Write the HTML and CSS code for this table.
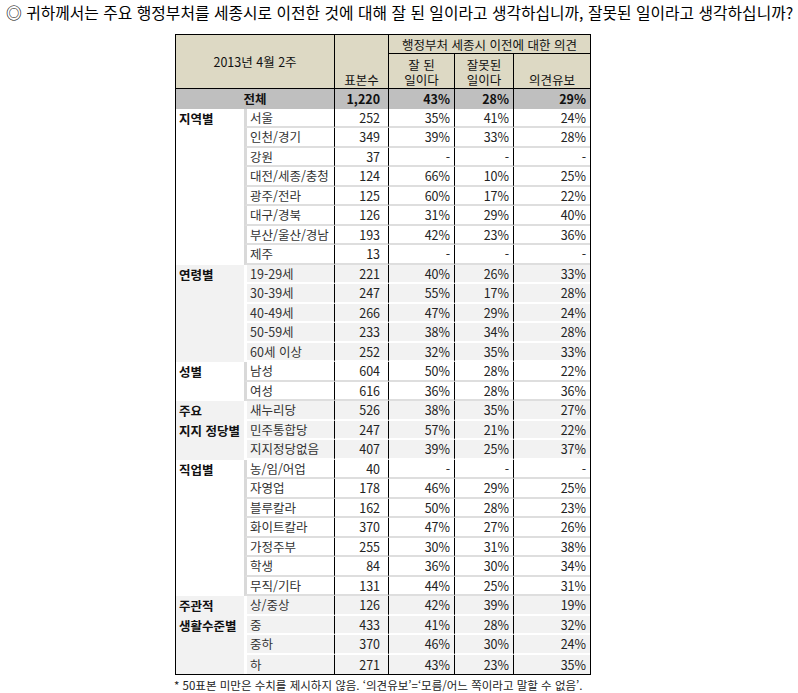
FILE: index.html
```html
<!DOCTYPE html>
<html lang="ko">
<head>
<meta charset="utf-8">
<link rel="stylesheet" href="styles.css">
</head>
<body>
<div class="title">◎ 귀하께서는 주요 행정부처를 세종시로 이전한 것에 대해 잘 된 일이라고 생각하십니까, 잘못된 일이라고 생각하십니까?</div>
<table class="survey">
  <colgroup>
    <col class="c-cat"><col class="c-sub"><col class="c-n"><col class="c-p1"><col class="c-p2"><col class="c-p3">
  </colgroup>
  <thead>
    <tr class="h1">
      <th colspan="2" rowspan="2" class="date">2013년 4월 2주</th>
      <th rowspan="2" class="nh">표본수</th>
      <th colspan="3" class="top">행정부처 세종시 이전에 대한 의견</th>
    </tr>
    <tr class="h2">
      <th class="ph">잘 된<br>일이다</th>
      <th class="ph">잘못된<br>일이다</th>
      <th class="ph">의견유보</th>
    </tr>
  </thead>
  <tbody class="total">
    <tr><td colspan="2" class="tl">전체</td><td class="n">1,220</td><td class="p">43%</td><td class="p">28%</td><td class="p">29%</td></tr>
  </tbody>
  <tbody class="w">
    <tr><td rowspan="8" class="cat">지역별</td><td class="sub">서울</td><td class="n">252</td><td class="p">35%</td><td class="p">41%</td><td class="p">24%</td></tr>
    <tr><td class="sub">인천/경기</td><td class="n">349</td><td class="p">39%</td><td class="p">33%</td><td class="p">28%</td></tr>
    <tr><td class="sub">강원</td><td class="n">37</td><td class="p">-</td><td class="p">-</td><td class="p">-</td></tr>
    <tr><td class="sub">대전/세종/충청</td><td class="n">124</td><td class="p">66%</td><td class="p">10%</td><td class="p">25%</td></tr>
    <tr><td class="sub">광주/전라</td><td class="n">125</td><td class="p">60%</td><td class="p">17%</td><td class="p">22%</td></tr>
    <tr><td class="sub">대구/경북</td><td class="n">126</td><td class="p">31%</td><td class="p">29%</td><td class="p">40%</td></tr>
    <tr><td class="sub">부산/울산/경남</td><td class="n">193</td><td class="p">42%</td><td class="p">23%</td><td class="p">36%</td></tr>
    <tr><td class="sub">제주</td><td class="n">13</td><td class="p">-</td><td class="p">-</td><td class="p">-</td></tr>
  </tbody>
  <tbody class="g">
    <tr><td rowspan="5" class="cat">연령별</td><td class="sub">19-29세</td><td class="n">221</td><td class="p">40%</td><td class="p">26%</td><td class="p">33%</td></tr>
    <tr><td class="sub">30-39세</td><td class="n">247</td><td class="p">55%</td><td class="p">17%</td><td class="p">28%</td></tr>
    <tr><td class="sub">40-49세</td><td class="n">266</td><td class="p">47%</td><td class="p">29%</td><td class="p">24%</td></tr>
    <tr><td class="sub">50-59세</td><td class="n">233</td><td class="p">38%</td><td class="p">34%</td><td class="p">28%</td></tr>
    <tr><td class="sub">60세 이상</td><td class="n">252</td><td class="p">32%</td><td class="p">35%</td><td class="p">33%</td></tr>
  </tbody>
  <tbody class="w">
    <tr><td rowspan="2" class="cat">성별</td><td class="sub">남성</td><td class="n">604</td><td class="p">50%</td><td class="p">28%</td><td class="p">22%</td></tr>
    <tr><td class="sub">여성</td><td class="n">616</td><td class="p">36%</td><td class="p">28%</td><td class="p">36%</td></tr>
  </tbody>
  <tbody class="g">
    <tr><td rowspan="3" class="cat">주요<br>지지 정당별</td><td class="sub">새누리당</td><td class="n">526</td><td class="p">38%</td><td class="p">35%</td><td class="p">27%</td></tr>
    <tr><td class="sub">민주통합당</td><td class="n">247</td><td class="p">57%</td><td class="p">21%</td><td class="p">22%</td></tr>
    <tr><td class="sub">지지정당없음</td><td class="n">407</td><td class="p">39%</td><td class="p">25%</td><td class="p">37%</td></tr>
  </tbody>
  <tbody class="w">
    <tr><td rowspan="7" class="cat">직업별</td><td class="sub">농/임/어업</td><td class="n">40</td><td class="p">-</td><td class="p">-</td><td class="p">-</td></tr>
    <tr><td class="sub">자영업</td><td class="n">178</td><td class="p">46%</td><td class="p">29%</td><td class="p">25%</td></tr>
    <tr><td class="sub">블루칼라</td><td class="n">162</td><td class="p">50%</td><td class="p">28%</td><td class="p">23%</td></tr>
    <tr><td class="sub">화이트칼라</td><td class="n">370</td><td class="p">47%</td><td class="p">27%</td><td class="p">26%</td></tr>
    <tr><td class="sub">가정주부</td><td class="n">255</td><td class="p">30%</td><td class="p">31%</td><td class="p">38%</td></tr>
    <tr><td class="sub">학생</td><td class="n">84</td><td class="p">36%</td><td class="p">30%</td><td class="p">34%</td></tr>
    <tr><td class="sub">무직/기타</td><td class="n">131</td><td class="p">44%</td><td class="p">25%</td><td class="p">31%</td></tr>
  </tbody>
  <tbody class="g last">
    <tr><td rowspan="4" class="cat">주관적<br>생활수준별</td><td class="sub">상/중상</td><td class="n">126</td><td class="p">42%</td><td class="p">39%</td><td class="p">19%</td></tr>
    <tr><td class="sub">중</td><td class="n">433</td><td class="p">41%</td><td class="p">28%</td><td class="p">32%</td></tr>
    <tr><td class="sub">중하</td><td class="n">370</td><td class="p">46%</td><td class="p">30%</td><td class="p">24%</td></tr>
    <tr><td class="sub">하</td><td class="n">271</td><td class="p">43%</td><td class="p">23%</td><td class="p">35%</td></tr>
  </tbody>
</table>
<div class="note">* 50표본 미만은 수치를 제시하지 않음. ‘의견유보’=‘모름/어느 쪽이라고 말할 수 없음’.</div>
</body>
</html>
```

FILE: styles.css
```css
html, body {
  margin: 0;
  padding: 0;
  background: #fff;
}
body {
  font-family: "Noto Sans CJK KR", "Noto Sans", sans-serif;
  color: #222;
}
.title {
  font-size: 15.8px;
  line-height: 26px;
  padding-left: 6px;
  color: #000;
  white-space: nowrap;
}
.survey {
  margin: 8px 0 0 175px;
  border-collapse: separate;
  border-spacing: 0;
  table-layout: fixed;
  width: 415px;
  border: 1px solid #000;
  font-size: 12.5px;
}
.c-cat { width: 68px; }
.c-sub { width: 90px; }
.c-n { width: 54px; }
.c-p1 { width: 66px; }
.c-p2 { width: 59px; }
.c-p3 { width: 77px; }

.survey th {
  background: #ddd9c4;
  font-weight: 400;
  color: #111;
  padding: 0;
  line-height: 15px;
  white-space: nowrap;
}
.h1 { height: 19px; }
.h2 { height: 35px; }
.survey .date {
  vertical-align: middle;
  text-align: center;
  border-bottom: 1px solid #000;
}
.survey .nh {
  vertical-align: bottom;
  text-align: center;
  border-left: 1px solid #000;
  border-bottom: 1px solid #000;
  padding-bottom: 1px;
}
.survey .top {
  border-left: 1px solid #000;
  border-bottom: 1px solid #000;
  text-align: center;
  vertical-align: middle;
}
.survey .ph {
  border-left: 1px solid #000;
  border-bottom: 1px solid #000;
  vertical-align: bottom;
  text-align: center;
  padding-bottom: 1px;
}

.survey td {
  padding: 0;
  line-height: 15px;
  vertical-align: middle;
  white-space: nowrap;
}
.survey tbody tr { height: 19.5px; }

.total td {
  background: #bfbfbf;
  font-weight: 700;
  color: #111;
}
.total td.tl { text-align: center; }

.survey td.n {
  border-left: 1px solid #000;
  text-align: right;
  padding-right: 8px;
}
.survey td.p {
  border-left: 1px solid #000;
  text-align: right;
  padding-right: 4px;
}

.survey td.sub {
  border-left: 3px solid #d9d9d9;
  padding-left: 3px;
  color: #333;
}
.survey td.cat {
  vertical-align: top;
  line-height: 19.5px;
  padding-left: 3px;
  font-weight: 700;
  color: #111;
}

.w td.sub, .w td.n, .w td.p {
  border-bottom: 2px solid #dedede;
}
.g td {
  background: #f2f2f2;
}
.survey .g td.sub { border-left-color: #fff; }
.g td.sub, .g td.n, .g td.p {
  border-bottom: 2px solid #fff;
}
.survey .last tr:last-child td { border-bottom: 0; }

.note {
  margin: 2px 0 0 174px;
  font-size: 11.5px;
  line-height: 16px;
  color: #222;
}
```
